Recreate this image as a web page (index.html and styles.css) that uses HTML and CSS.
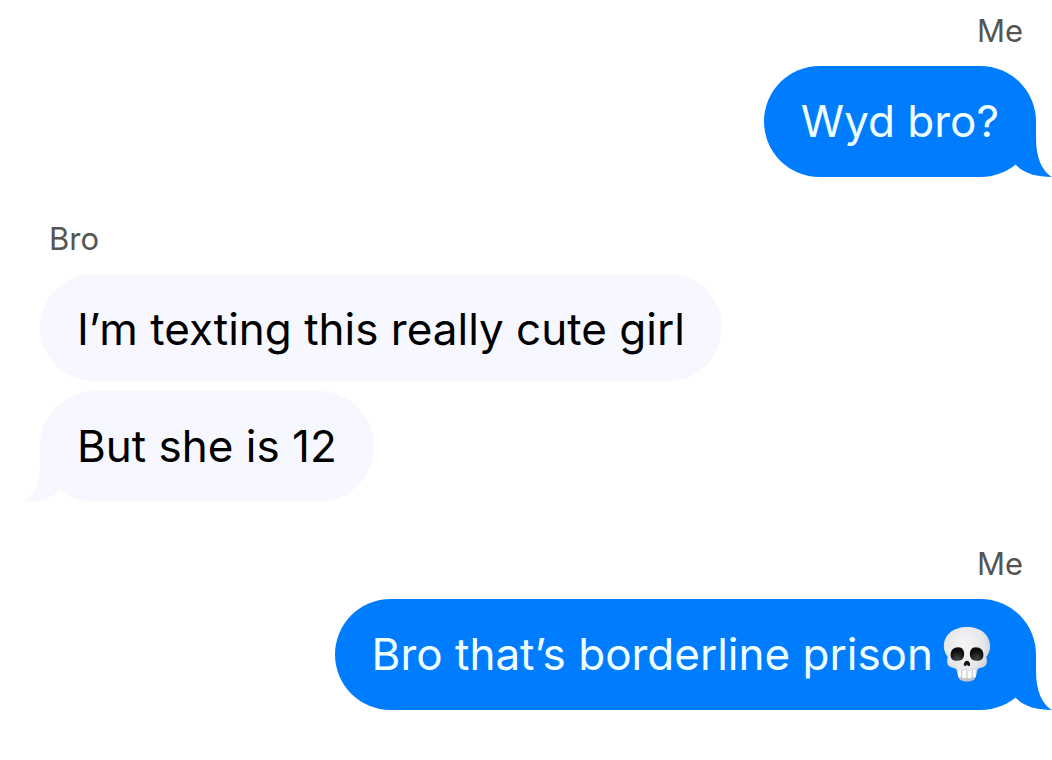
FILE: index.html
```html
<!DOCTYPE html>
<html lang="en">
<head>
    <meta charset="utf-8">
    <meta name="viewport" content="width=device-width, initial-scale=1">
    <title>Messages</title>
    <link rel="stylesheet" href="styles.css">
</head>
<body>
    <main class="chat">
        <section class="group sent">
            <h2 class="sender">Me</h2>
            <p class="bubble">Wyd bro?
                <svg class="tail" viewBox="0 0 52 57" aria-hidden="true"><path d="M0 0H36V18C36 38 42 51 52 57C37 57 24 54 15 44L0 32Z"/></svg>
            </p>
        </section>

        <section class="group received">
            <h2 class="sender">Bro</h2>
            <p class="bubble compact">I’m texting this really cute girl</p>
            <p class="bubble">But she is 12
                <svg class="tail" viewBox="0 0 52 57" aria-hidden="true"><path d="M0 0H36V18C36 38 42 51 52 57C37 57 24 54 15 44L0 32Z"/></svg>
            </p>
        </section>

        <section class="group sent">
            <h2 class="sender">Me</h2>
            <p class="bubble">Bro that’s borderline prison
                <svg class="skull" viewBox="0 0 48 57" role="img" aria-label="skull">
                    <defs>
                        <radialGradient id="bone" cx="45%" cy="35%" r="70%">
                            <stop offset="0" stop-color="#f6f6f8"/>
                            <stop offset="0.6" stop-color="#e6e7ea"/>
                            <stop offset="1" stop-color="#babdc5"/>
                        </radialGradient>
                        <radialGradient id="socket" cx="50%" cy="85%" r="60%">
                            <stop offset="0" stop-color="#444"/>
                            <stop offset="1" stop-color="#0c0c0d"/>
                        </radialGradient>
                    </defs>
                    <path fill="url(#bone)" d="M24 0C10 0 0 8 0 20C0 25 2 28 4 31C3 35 3 39 6 41C9 43 12 42 13 44L15 52C17 58 31 58 33 52L35 44C36 42 39 43 42 41C45 39 45 35 44 31C46 28 48 25 48 20C48 8 38 0 24 0Z"/>
                    <path fill="url(#socket)" d="M15 21C19 21 21 24 21 28C21 32 19 35 14 35C9 35 7 33 7 29C7 24 10 21 15 21Z"/>
                    <path fill="url(#socket)" d="M33 21C38 21 41 24 41 29C41 33 39 35 34 35C29 35 27 32 27 28C27 24 29 21 33 21Z"/>
                    <path fill="#111" d="M24 35C22 35 20 38 21 40C22 41 23 40 24 39C25 40 26 41 27 40C28 38 26 35 24 35Z"/>
                    <path fill="#c0c2c8" d="M14 44C20 46 28 46 34 44L32 52C30 56 18 56 16 52Z"/>
                    <g fill="#fcfcfc">
                        <rect x="15" y="44" width="3" height="8" rx="1"/>
                        <rect x="19" y="45" width="4.5" height="8" rx="1"/>
                        <rect x="24.5" y="45" width="4.5" height="8" rx="1"/>
                        <rect x="30" y="44" width="3" height="8" rx="1"/>
                    </g>
                </svg>
                <svg class="tail" viewBox="0 0 52 57" aria-hidden="true"><path d="M0 0H36V18C36 38 42 51 52 57C37 57 24 54 15 44L0 32Z"/></svg>
            </p>
        </section>
    </main>
</body>
</html>
```
FILE: styles.css
```css
* {
    box-sizing: border-box;
}

body {
    margin: 0;
    background-color: #fff;
    font-family: Inter, "Liberation Sans", sans-serif;
}

.chat {
    display: flex;
    flex-direction: column;
    gap: 43px;
    padding: 12px 16px 48px 40px;
}

.group {
    display: flex;
    flex-direction: column;
    align-items: flex-start;
    gap: 10px;
}

.sent {
    align-items: flex-end;
}

.sender {
    margin: 0 13px 6px 9px;
    color: #555;
    font-size: 31px;
    font-weight: 400;
    line-height: 38px;
}

.bubble {
    position: relative;
    display: flex;
    align-items: center;
    margin: 0;
    padding: 28px 37px;
    border-radius: 56px;
    background-color: #f7f7ff;
    color: #000;
    font-size: 44px;
    line-height: 55px;
}

.compact {
    padding-bottom: 24px;
}

.sent .bubble {
    background-color: #007dff;
    color: #efffff;
}

/* the tail hangs off the bottom corner on the sender's side */
.tail {
    position: absolute;
    right: -16px;
    bottom: 0;
    width: 52px;
    height: 57px;
    fill: #007dff;
}

.received .tail {
    right: auto;
    left: -16px;
    fill: #f7f7ff;
    transform: scaleX(-1);
}

.skull {
    width: 48px;
    height: 55px;
    margin: 0 8px 0 10px;
}
```
